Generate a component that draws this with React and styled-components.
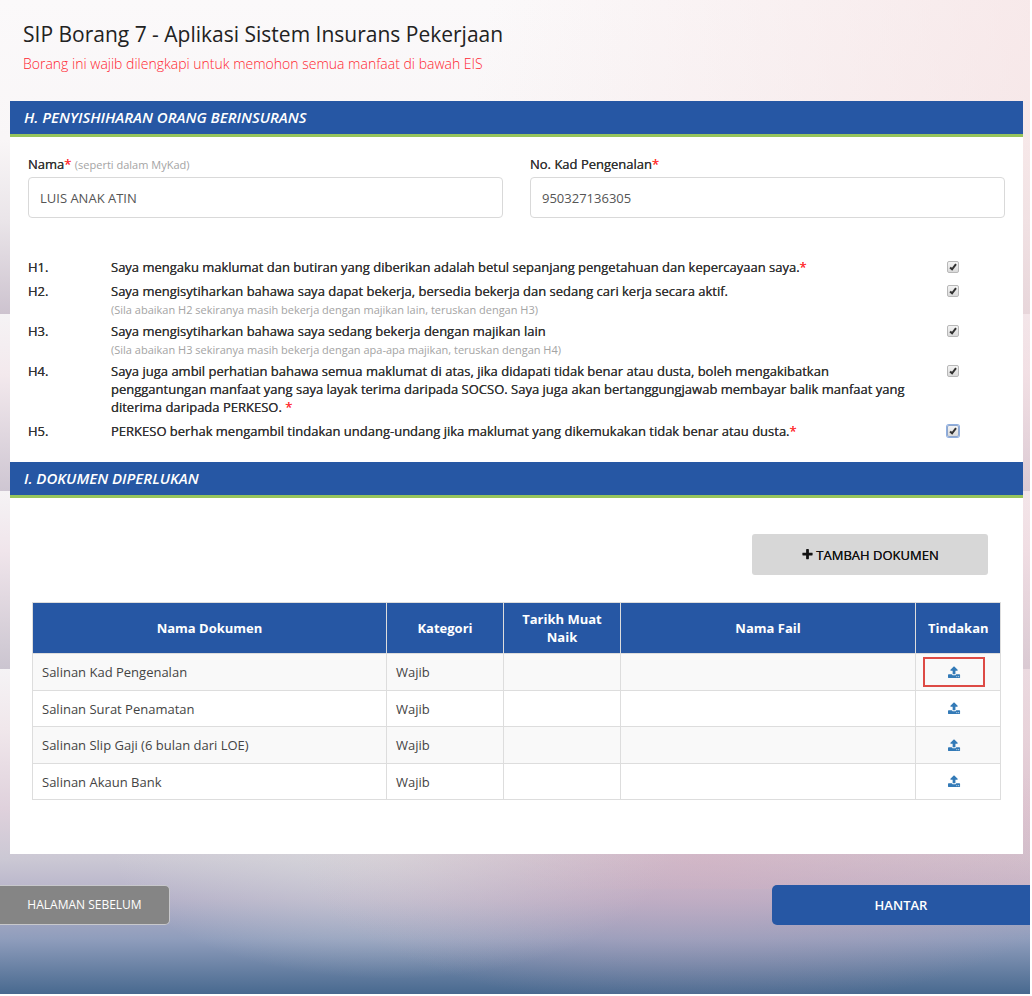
import React, { useState } from 'react';
import styled, { createGlobalStyle } from 'styled-components';

const tick = `url("data:image/svg+xml,%3Csvg xmlns='http://www.w3.org/2000/svg' viewBox='0 0 12 12'%3E%3Cpath d='M2.5 6.5l2.4 2.3L9.6 2.6' fill='none' stroke='%23333' stroke-width='2.4'/%3E%3C/svg%3E")`;

const GlobalStyle = createGlobalStyle`
  * {
    box-sizing: border-box;
  }
  body {
    margin: 0;
    background-color: #fff;
  }
`;

const Page = styled.div`
  margin: 0 2px 2px 0;
  font-family: 'Open Sans', sans-serif;
  font-size: 13px;
  line-height: 18px;
  color: #444;
  background:
    linear-gradient(100deg, #fff0 45%, #f5dfe0aa 100%) 0 0 / 100% 314px no-repeat,
    linear-gradient(#fbf9fa, #f9f6f7 140px, #eae5e9 220px, #cdc3cf 314px) 0 0 / 100% 314px no-repeat,
    linear-gradient(90deg, #fff0 50%, #f0d0d666 100%) 0 314px / 100% 355px no-repeat,
    linear-gradient(#f5f3f5, #f3e9ed 60px, #cec6d2) 0 314px / 100% 177px no-repeat,
    linear-gradient(#f5f3f5, #f0e5eb 60px, #cbc5d0) 0 491px / 100% 178px no-repeat,
    radial-gradient(ellipse 400px 150px at 68% 190px, #d5a8bc80, #d5a8bc00) 0 669px / 100% 325px no-repeat,
    radial-gradient(ellipse 280px 130px at 38% 180px, #dedede99, #dedede00) 0 669px / 100% 325px no-repeat,
    linear-gradient(90deg, #fff0 50%, #dcb4c066 100%) 0 669px / 100% 220px no-repeat,
    linear-gradient(#f5f3f5, #f0e7eb 60px, #dfd1dc 140px, #cbc8d4 190px, #b4b0c8 230px, #8f9dbc 270px, #48698f) 0 669px / 100% 325px no-repeat;
`;

const Header = styled.header`
  padding: 20px 23px 26px;
`;

const Title = styled.h1`
  margin: 0;
  font-size: 21px;
  font-weight: 400;
  line-height: 28px;
  color: #222;
`;

const Subtitle = styled.p`
  margin: 5px 0 0;
  font-size: 14px;
  font-weight: 300;
  line-height: 22px;
  color: #ff1f30;
`;

const Panel = styled.main`
  margin: 0 7px 0 10px;
  background-color: #fff;
`;

const SectionTitle = styled.h2`
  margin: 0;
  padding: 0 14px;
  font-size: 15px;
  font-style: italic;
  font-weight: 600;
  line-height: 33px;
  color: #fff;
  background-color: #2657a4;
  border-bottom: 3px solid #96c45c;
`;

const Fields = styled.div`
  display: grid;
  grid-template-columns: 1fr 1fr;
  gap: 27px;
  padding: 18px 18px 0;
`;

const Field = styled.div`
  display: flex;
  flex-direction: column;
  gap: 4px;
`;

const Label = styled.label`
  font-weight: 500;
  color: #333;
  text-shadow: 0 0 0 currentColor;
`;

const Required = styled.span`
  color: #f33;
`;

const Hint = styled.small`
  display: ${(props) => (props.$block ? 'block' : 'inline')};
  margin-top: 4px;
  font-size: 11px;
  font-weight: 400;
  line-height: 12px;
  color: #a4a4a4;
  text-shadow: none;
`;

const TextInput = styled.input`
  width: 100%;
  height: 41px;
  padding: 0 11px;
  font: inherit;
  color: #555;
  background-color: #fff;
  border: 1px solid #d9d9d9;
  border-radius: 4px;
`;

const Declarations = styled.div`
  display: grid;
  gap: 6px;
  padding: 40px 42px 22px 18px;
`;

const Declaration = styled.div`
  display: grid;
  grid-template-columns: 83px 1fr 56px;
  font-weight: 500;
  color: #333;
  text-shadow: 0 0 0 currentColor;
`;

const Checkbox = styled.input`
  appearance: none;
  justify-self: center;
  width: 12px;
  height: 12px;
  margin: 3px 0 0;
  background: ${tick}, linear-gradient(#f4f4f4, #dadada);
  border: 1px solid #b8b8b8;
  border-radius: 2px;
  &:not(:checked) {
    background: linear-gradient(#f4f4f4, #dadada);
  }
  ${(props) => props.$active && 'box-shadow: 0 0 0 1px #8eaee0; border-color: #8ea6cc;'}
`;

const Documents = styled.div`
  padding: 36px 22px 54px;
`;

const AddButton = styled.button`
  display: flex;
  align-items: center;
  justify-content: center;
  gap: 2px;
  width: 236px;
  height: 41px;
  margin: 0 13px 27px auto;
  font: inherit;
  font-weight: 500;
  color: #111;
  text-shadow: 0 0 0 currentColor;
  background-color: #d7d7d7;
  border: none;
  border-radius: 3px;
  cursor: pointer;
`;

const Table = styled.table`
  width: 100%;
  table-layout: fixed;
  border-collapse: collapse;
`;

const Column = styled.col`
  width: ${(props) => props.$width};
`;

const HeadCell = styled.th`
  height: 51px;
  padding: 0 12px;
  font-weight: 700;
  color: #fff;
  background-color: #2657a4;
  border: 1px solid #ddd;
`;

const Row = styled.tr`
  height: 36px;
  &:nth-child(odd) {
    height: 37px;
    background-color: #f9f9f9;
  }
`;

const Cell = styled.td`
  padding: 0 9px;
  border: 1px solid #ddd;
`;

const ActionCell = styled(Cell)`
  padding: 0 8px 0 0;
`;

const UploadButton = styled.button`
  display: flex;
  align-items: center;
  justify-content: center;
  width: 62px;
  height: 30px;
  margin: 0 auto;
  padding: 0;
  color: #337ab7;
  background: none;
  border: 2px solid ${(props) => (props.$highlighted ? '#dd4b45' : 'transparent')};
  cursor: pointer;
`;

const Footer = styled.footer`
  display: flex;
  justify-content: space-between;
  padding: 31px 0 69px;
`;

const BackButton = styled.button`
  width: 170px;
  height: 40px;
  font: inherit;
  font-size: 12px;
  color: #fff;
  background-color: #858585;
  border: 1px solid #c8c8cc;
  border-left: none;
  border-radius: 0 5px 5px 0;
  cursor: pointer;
`;

const SubmitButton = styled.button`
  width: 258px;
  height: 40px;
  font: inherit;
  font-weight: 600;
  color: #fff;
  background-color: #2657a4;
  border: none;
  border-radius: 5px 0 0 5px;
  cursor: pointer;
`;

const UploadIcon = () => (
  <svg width="13" height="13" viewBox="0 0 1792 1792" fill="currentColor" aria-hidden="true">
    <path d="M1280 1472q0-26-19-45t-45-19-45 19-19 45 19 45 45 19 45-19 19-45zm256 0q0-26-19-45t-45-19-45 19-19 45 19 45 45 19 45-19 19-45zm128-224v320q0 40-28 68t-68 28h-1472q-40 0-68-28t-28-68v-320q0-40 28-68t68-28h427q21 56 70.5 92t110.5 36h256q61 0 110.5-36t70.5-92h427q40 0 68 28t28 68zm-325-648q-17 40-59 40h-256v448q0 26-19 45t-45 19h-256q-26 0-45-19t-19-45v-448h-256q-42 0-59-40-17-39 14-69l448-448q18-19 45-19t45 19l448 448q31 30 14 69z" />
  </svg>
);

const PlusIcon = () => (
  <svg width="13" height="13" viewBox="0 0 1792 1792" fill="currentColor" aria-hidden="true">
    <path d="M1600 736v192q0 40-28 68t-68 28h-416v416q0 40-28 68t-68 28h-192q-40 0-68-28t-28-68v-416h-416q-40 0-68-28t-28-68v-192q0-40 28-68t68-28h416v-416q0-40 28-68t68-28h192q40 0 68 28t28 68v416h416q40 0 68 28t28 68z" />
  </svg>
);

const declarations = [
  { id: 'H1', text: 'Saya mengaku maklumat dan butiran yang diberikan adalah betul sepanjang pengetahuan dan kepercayaan saya.', required: true },
  { id: 'H2', text: 'Saya mengisytiharkan bahawa saya dapat bekerja, bersedia bekerja dan sedang cari kerja secara aktif.', hint: '(Sila abaikan H2 sekiranya masih bekerja dengan majikan lain, teruskan dengan H3)' },
  { id: 'H3', text: 'Saya mengisytiharkan bahawa saya sedang bekerja dengan majikan lain', hint: '(Sila abaikan H3 sekiranya masih bekerja dengan apa-apa majikan, teruskan dengan H4)' },
  { id: 'H4', text: 'Saya juga ambil perhatian bahawa semua maklumat di atas, jika didapati tidak benar atau dusta, boleh mengakibatkan penggantungan manfaat yang saya layak terima daripada SOCSO. Saya juga akan bertanggungjawab membayar balik manfaat yang diterima daripada PERKESO. ', required: true },
  { id: 'H5', text: 'PERKESO berhak mengambil tindakan undang-undang jika maklumat yang dikemukakan tidak benar atau dusta.', required: true },
];

const documents = [
  'Salinan Kad Pengenalan',
  'Salinan Surat Penamatan',
  'Salinan Slip Gaji (6 bulan dari LOE)',
  'Salinan Akaun Bank',
];

const App = () => {
  const [name, setName] = useState('LUIS ANAK ATIN');
  const [idNumber, setIdNumber] = useState('950327136305');
  const [checked, setChecked] = useState({ H1: true, H2: true, H3: true, H4: true, H5: true });
  const [active, setActive] = useState('H5');

  const toggle = (id) => {
    setChecked({ ...checked, [id]: !checked[id] });
    setActive(id);
  };

  return (
    <>
      <GlobalStyle />
      <Page>
        <Header>
          <Title>SIP Borang 7 - Aplikasi Sistem Insurans Pekerjaan</Title>
          <Subtitle>Borang ini wajib dilengkapi untuk memohon semua manfaat di bawah EIS</Subtitle>
        </Header>
        <Panel>
          <SectionTitle>H. PENYISHIHARAN ORANG BERINSURANS</SectionTitle>
          <Fields>
            <Field>
              <Label htmlFor="nama">
                Nama<Required>*</Required> <Hint>(seperti dalam MyKad)</Hint>
              </Label>
              <TextInput id="nama" type="text" value={name} onChange={(e) => setName(e.target.value)} />
            </Field>
            <Field>
              <Label htmlFor="kad">
                No. Kad Pengenalan<Required>*</Required>
              </Label>
              <TextInput id="kad" type="text" value={idNumber} onChange={(e) => setIdNumber(e.target.value)} />
            </Field>
          </Fields>
          <Declarations>
            {declarations.map((item) => (
              <Declaration key={item.id}>
                <span>{item.id}.</span>
                <label htmlFor={item.id}>
                  {item.text}
                  {item.required && <Required>*</Required>}
                  {item.hint && <Hint $block>{item.hint}</Hint>}
                </label>
                <Checkbox
                  id={item.id}
                  type="checkbox"
                  checked={checked[item.id]}
                  $active={active === item.id}
                  onChange={() => toggle(item.id)}
                />
              </Declaration>
            ))}
          </Declarations>
          <SectionTitle>I. DOKUMEN DIPERLUKAN</SectionTitle>
          <Documents>
            <AddButton type="button">
              <PlusIcon />
              TAMBAH DOKUMEN
            </AddButton>
            <Table>
              <colgroup>
                <Column $width="354px" />
                <Column $width="117px" />
                <Column $width="117px" />
                <Column $width="auto" />
                <Column $width="85px" />
              </colgroup>
              <thead>
                <tr>
                  <HeadCell>Nama Dokumen</HeadCell>
                  <HeadCell>Kategori</HeadCell>
                  <HeadCell>Tarikh Muat Naik</HeadCell>
                  <HeadCell>Nama Fail</HeadCell>
                  <HeadCell>Tindakan</HeadCell>
                </tr>
              </thead>
              <tbody>
                {documents.map((doc, index) => (
                  <Row key={doc}>
                    <Cell>{doc}</Cell>
                    <Cell>Wajib</Cell>
                    <Cell />
                    <Cell />
                    <ActionCell>
                      <UploadButton type="button" aria-label={`Muat naik ${doc}`} $highlighted={index === 0}>
                        <UploadIcon />
                      </UploadButton>
                    </ActionCell>
                  </Row>
                ))}
              </tbody>
            </Table>
          </Documents>
        </Panel>
        <Footer>
          <BackButton type="button">HALAMAN SEBELUM</BackButton>
          <SubmitButton type="submit">HANTAR</SubmitButton>
        </Footer>
      </Page>
    </>
  );
};

export default App;
